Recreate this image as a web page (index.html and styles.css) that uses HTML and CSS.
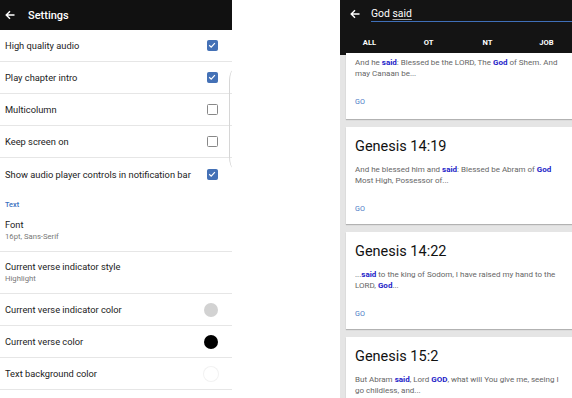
FILE: index.html
```html
<!DOCTYPE html>
<html lang="en">
  <head>
    <meta charset="UTF-8" />
    <meta name="viewport" content="width=device-width, initial-scale=1.0" />
    <title>Settings and Search</title>
    <link rel="stylesheet" href="styles.css">
  </head>
  <body>
    <div class="screens">
      <div class="phone settings">
        <div class="appbar">
          <svg class="back" width="10" height="10" viewBox="0 0 10 10"><path d="M9.5 5H1.2M5 1.2L1.2 5L5 8.8" fill="none" stroke="#fff" stroke-width="1.4"/></svg>
          <span class="appbar-title">Settings</span>
        </div>

        <div class="pref"><span>High quality audio</span><span class="check on"><svg viewBox="0 0 10 10"><path d="M2.2 5.2L4.2 7.1L7.9 3.1" fill="none" stroke="#fff" stroke-width="1.2"/></svg></span></div>
        <div class="pref"><span>Play chapter intro</span><span class="check on"><svg viewBox="0 0 10 10"><path d="M2.2 5.2L4.2 7.1L7.9 3.1" fill="none" stroke="#fff" stroke-width="1.2"/></svg></span></div>
        <div class="pref"><span>Multicolumn</span><span class="check"></span></div>
        <div class="pref"><span>Keep screen on</span><span class="check"></span></div>
        <div class="pref last"><span>Show audio player controls in notification bar</span><span class="check on"><svg viewBox="0 0 10 10"><path d="M2.2 5.2L4.2 7.1L7.9 3.1" fill="none" stroke="#fff" stroke-width="1.2"/></svg></span></div>

        <div class="pref-cat">Text</div>
        <div class="pref two">
          <div class="pref-title">Font</div>
          <div class="pref-sum">16pt, Sans-Serif</div>
        </div>
        <div class="pref two">
          <div class="pref-title">Current verse indicator style</div>
          <div class="pref-sum">Highlight</div>
        </div>
        <div class="pref"><span>Current verse indicator color</span><span class="swatch grey"></span></div>
        <div class="pref"><span>Current verse color</span><span class="swatch black"></span></div>
        <div class="pref"><span>Text background color</span><span class="swatch white"></span></div>
        <div class="pref"><span></span><span class="swatch black"></span></div>

        <div class="edge"></div>
      </div>

      <div class="phone search">
        <div class="search-head">
          <div class="search-bar">
            <svg class="back" width="10" height="10" viewBox="0 0 10 10"><path d="M9.5 5H1.2M5 1.2L1.2 5L5 8.8" fill="none" stroke="#fff" stroke-width="1.4"/></svg>
            <div class="search-field">God <span class="spell">said</span></div>
          </div>
          <div class="tabs">
            <div class="tab active">ALL</div>
            <div class="tab">OT</div>
            <div class="tab">NT</div>
            <div class="tab">JOB</div>
          </div>
        </div>

        <div class="results">
          <!-- first result is scrolled up under the header -->
          <div class="card cut">
            <p>And he <b>said</b>: Blessed be the LORD, The <b>God</b> of Shem. And<br>may Canaan be...</p>
            <a href="#">GO</a>
          </div>
          <div class="card">
            <div class="ref">Genesis 14:19</div>
            <p>And he blessed him and <b>said</b>: Blessed be Abram of <b>God</b><br>Most High, Possessor of...</p>
            <a href="#">GO</a>
          </div>
          <div class="card">
            <div class="ref">Genesis 14:22</div>
            <p>...<b>said</b> to the king of Sodom, I have raised my hand to the<br>LORD, <b>God</b>...</p>
            <a href="#">GO</a>
          </div>
          <div class="card">
            <div class="ref">Genesis 15:2</div>
            <p>But Abram <b>said</b>, Lord <b>GOD</b>, what will You give me, seeing I<br>go childless, and...</p>
            <a href="#">GO</a>
          </div>
        </div>
      </div>
    </div>
  </body>
</html>
```

FILE: styles.css
```css
body {
  margin: 0;
  padding: 0;
  background-color: #fff;
  font-family: Roboto, "Liberation Sans", sans-serif;
  width: 572px;
  height: 398px;
  overflow: hidden;
}
.screens {
  display: flex;
  gap: 108px;
  height: 398px;
}
.phone {
  height: 398px;
  overflow: hidden;
  flex-shrink: 0;
}

/* settings screen */
.settings {
  width: 232px;
  position: relative;
}
.appbar {
  height: 30px;
  background-color: #111;
  display: flex;
  align-items: center;
  padding-left: 5px;
  box-sizing: border-box;
}
.appbar-title {
  color: #fff;
  font-size: 11px;
  font-weight: 500;
  margin-left: 13px;
}
.pref {
  height: 32px;
  box-sizing: border-box;
  border-bottom: 1px solid #e6e6e6;
  display: flex;
  align-items: center;
  justify-content: space-between;
  padding: 0 14px 0 5px;
  font-size: 9.3px;
  color: #222;
}
.pref.last {
  border-bottom: none;
}
.pref.two {
  height: 42px;
  display: block;
  padding-top: 9px;
}
.pref-title {
  line-height: 12px;
}
.pref-sum {
  line-height: 12px;
  font-size: 7.7px;
  color: #777;
}
.pref-cat {
  height: 20px;
  padding: 10px 0 0 5px;
  box-sizing: border-box;
  font-size: 7.3px;
  font-weight: 500;
  line-height: 10px;
  color: #3a6fc0;
}
.check {
  width: 11px;
  height: 11px;
  box-sizing: border-box;
  border: 1.5px solid #888;
  border-radius: 1.5px;
  display: flex;
}
.check.on {
  background-color: #4471b6;
  border-color: #4471b6;
}
.check svg {
  width: 10px;
  height: 10px;
  margin: -1px 0 0 -1px;
}
.swatch {
  width: 14px;
  height: 14px;
  border-radius: 50%;
}
.swatch.grey {
  background-color: #d2d2d2;
}
.swatch.black {
  background-color: #000;
}
.swatch.white {
  background-color: #fff;
  box-shadow: 0 0 0 1px #f2f2f2;
}
.edge {
  position: absolute;
  left: 229px;
  top: 70px;
  width: 8px;
  height: 98px;
  border-left: 1px solid #d6d6d6;
  border-radius: 8px / 20px;
}

/* search screen */
.search {
  width: 236px;
  background-color: #e5e5e5;
}
.search-head {
  background-color: #141414;
  height: 55px;
}
.search-bar {
  height: 30px;
  display: flex;
  align-items: flex-start;
  padding-left: 10px;
}
.search-bar .back {
  margin-top: 9px;
  flex-shrink: 0;
}
.search-field {
  flex: 1;
  margin-left: 11px;
  padding-top: 7px;
  line-height: 14px;
  font-size: 10.4px;
  color: #fff;
  border-bottom: 1px solid #3f6fb8;
}
.spell {
  text-decoration: underline;
  text-decoration-color: #aaa;
  text-underline-offset: 2px;
}
.tabs {
  display: flex;
  height: 25px;
}
.tab {
  flex: 1;
  text-align: center;
  color: #fff;
  font-size: 7.6px;
  font-weight: 700;
  line-height: 25px;
}
.tab.active {
  border-bottom: 2px solid #141414;
  background-color: #141414;
}
.results {
  margin-top: -2px;
  padding-left: 6px;
  display: flex;
  flex-direction: column;
  gap: 8px;
}
.card {
  background-color: #fff;
  height: 97px;
  box-sizing: border-box;
  padding: 11px 0 0 9px;
  box-shadow: 0 1px 1px rgba(0, 0, 0, 0.22);
}
.card.cut {
  height: 66px;
  padding-top: 4px;
}
.ref {
  font-size: 14.5px;
  line-height: 18px;
  color: #111;
}
.card p {
  margin: 8px 0 0;
  font-size: 8px;
  line-height: 11px;
  color: #666;
  white-space: nowrap;
}
.card.cut p {
  margin-top: 0;
}
.card a {
  display: block;
  margin-top: 17px;
  font-size: 7.2px;
  line-height: 11px;
  color: #4a7bc5;
  text-decoration: none;
}
.card p b {
  color: #1c1cc8;
}
```
